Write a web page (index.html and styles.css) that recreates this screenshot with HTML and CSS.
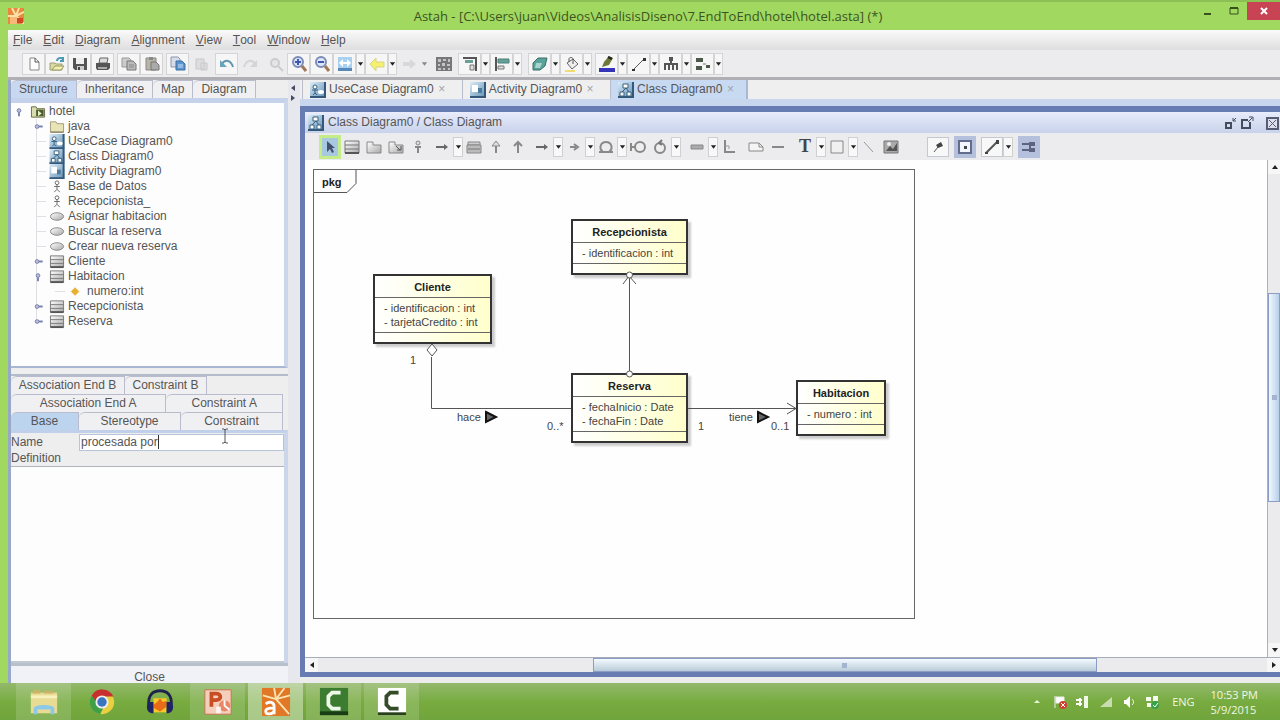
FILE: index.html
```html
<!DOCTYPE html>
<html lang="en">
<head>
    <meta charset="UTF-8">
    <meta name="viewport" content="width=device-width, initial-scale=1.0">
    <title>Astah</title>
    <link rel="stylesheet" href="styles.css">
</head>
<body>
    <!-- icons -->
    <svg class="sprite" aria-hidden="true">
        <defs>
            <linearGradient id="blue" x1="0" y1="0" x2="1" y2="1"><stop offset="0" stop-color="#dcecf6"/><stop offset="1" stop-color="#5c8cb4"/></linearGradient>
            <linearGradient id="gray" x1="0" y1="0" x2="1" y2="1"><stop offset="0" stop-color="#ffffff"/><stop offset="1" stop-color="#a8a8a8"/></linearGradient>
        </defs>
        <symbol id="new" viewBox="0 0 16 16"><path d="M4 2h5l4 4v8H4z" fill="#fff" stroke="#888"/><path d="M9 2v4h4" fill="none" stroke="#555"/></symbol>
        <symbol id="open" viewBox="0 0 16 16"><path d="M1 7h5l1 1h6v6H1z" fill="#d8d8a0" stroke="#a0a070"/><path d="M3 14l3-4h9l-3 4z" fill="#f4f0b0" stroke="#98986a"/><path d="M8 5c0-3 4-4 6-2m0-2v4h-3" fill="none" stroke="#4a9ab8" stroke-width="2"/></symbol>
        <symbol id="save" viewBox="0 0 16 16"><path d="M1 2h14v12H3l-2-2z" fill="#555"/><path d="M4 2h8v6H4z" fill="#eee"/><path d="M5 10h7v4H5z" fill="#ccc"/><path d="M6 11h2v3H6z" fill="#444"/></symbol>
        <symbol id="print" viewBox="0 0 16 16"><path d="M5 2h8l-1 5H4z" fill="#ddd" stroke="#666"/><path d="M1 7h14v5l-2 2H2l-1-2z" fill="#555"/><path d="M3 11h9v2H3z" fill="#aaa"/></symbol>
        <symbol id="copy" viewBox="0 0 16 16"><path d="M1 2h7l2 2v7H1z" fill="#ccc" stroke="#999"/><path d="M6 5h6l3 3v6H6z" fill="#bbb" stroke="#777"/><path d="M8 9h5M8 11h5" stroke="#888"/></symbol>
        <symbol id="paste" viewBox="0 0 16 16"><path d="M2 2h10v12H2z" fill="#b8b4a4" stroke="#888"/><path d="M5 1h4v3H5z" fill="#888"/><path d="M7 6h5l3 3v5H7z" fill="#aaa" stroke="#777"/></symbol>
        <symbol id="copyblue" viewBox="0 0 16 16"><path d="M1 1h7l2 2v8H1z" fill="#d8dce8" stroke="#8894ac"/><path d="M6 5h6l3 3v6H6z" fill="#5c94cc" stroke="#3a6ea8"/><path d="M8 9h5M8 11h5" stroke="#cfe2f4"/></symbol>
        <symbol id="pasteoff" viewBox="0 0 16 16"><path d="M3 3h8v10H3zM8 7h6v7H8z" fill="#ddd" stroke="#c8c8c8"/></symbol>
        <symbol id="undo" viewBox="0 0 16 16"><path d="M3 8c3-5 9-4 11 3" fill="none" stroke="#6098b0" stroke-width="2"/><path d="M1 4v7h7z" fill="#6aa4bc"/></symbol>
        <symbol id="redo" viewBox="0 0 16 16"><path d="M13 8C10 3 4 4 2 11" fill="none" stroke="#d4d4d4" stroke-width="2"/><path d="M15 4v7H8z" fill="#d4d4d4"/></symbol>
        <symbol id="zoomoff" viewBox="0 0 16 16"><circle cx="7" cy="7" r="4" fill="#e4e4e4" stroke="#ccc" stroke-width="2"/><path d="M10 10l5 5" stroke="#ccc" stroke-width="2"/></symbol>
        <symbol id="zoomin" viewBox="0 0 16 16"><circle cx="7" cy="6" r="5" fill="#dce6f8" stroke="#7c8cb8" stroke-width="2"/><path d="M4 6h6M7 3v6" stroke="#3c58b0" stroke-width="2"/><path d="M11 10l4 5" stroke="#a07858" stroke-width="3"/></symbol>
        <symbol id="zoomout" viewBox="0 0 16 16"><circle cx="7" cy="6" r="5" fill="#dce6f8" stroke="#7c8cb8" stroke-width="2"/><path d="M4 6h6" stroke="#3c58b0" stroke-width="2"/><path d="M11 10l4 5" stroke="#a07858" stroke-width="3"/></symbol>
        <symbol id="fit" viewBox="0 0 16 16"><path d="M1 1h14v13H1z" fill="#a8d0f0"/><path d="M2 7l4-4v3h4V3l4 4-4 4V8H6v3z" fill="#fff"/><path d="M1 12h14v3H1z" fill="#5888b8"/></symbol>
        <symbol id="back" viewBox="0 0 16 16"><path d="M1 8l6-6v4h8v5H7v4z" fill="#f4f070" stroke="#d8d480"/></symbol>
        <symbol id="forward" viewBox="0 0 16 16"><path d="M15 8L9 3v3H2v4h7v3z" fill="#d8d8d8"/></symbol>
        <symbol id="grid" viewBox="0 0 16 16"><path d="M0 1h16v14H0z" fill="#777"/><path d="M2 3h3v3H2zM7 3h3v2H7zM12 3h2v3h-2zM2 8h2v2H2zM6 7h3v3H6zM11 8h3v2h-3zM2 12h3v2H2zM7 12h2v2H7zM12 12h2v2h-2z" fill="#c4c4c4"/></symbol>
        <symbol id="alignr" viewBox="0 0 16 16"><path d="M1 2h14M14 1v14" stroke="#555" stroke-width="2"/><path d="M3 4h8v3H3z" fill="#68a098"/><path d="M8 9h4v5H8z" fill="#ddd" stroke="#777"/></symbol>
        <symbol id="alignl" viewBox="0 0 16 16"><path d="M2 1v14" stroke="#555" stroke-width="2"/><path d="M4 3h11v4H4z" fill="#68a098" stroke="#4c807c"/><path d="M4 10h6v3H4z" fill="#ddd" stroke="#777"/></symbol>
        <symbol id="cube" viewBox="0 0 16 16"><path d="M1 7l5-5h9l-2 8-5 4H1z" fill="#58a49c" stroke="#3c6c68"/><path d="M4 7h6l-2 5H3z" fill="#a8d4cc"/></symbol>
        <symbol id="bucket" viewBox="0 0 16 16"><path d="M3 7l6-4 5 5-6 5z" fill="#eee" stroke="#666"/><path d="M5 6V3c0-2 4-2 4 0v5" fill="none" stroke="#555"/><path d="M1 14h10v2H1z" fill="#f0dc70"/></symbol>
        <symbol id="pen" viewBox="0 0 16 16"><path d="M3 11l2-5 5-6 4 2-4 7z" fill="#6c7838"/><path d="M9 1l4 2" stroke="#222" stroke-width="2"/><path d="M0 12h16v4H0z" fill="#3434b8"/></symbol>
        <symbol id="line" viewBox="0 0 16 16"><path d="M2 14L13 3" stroke="#555"/><path d="M1 13h3v2H1zM12 2h3v3h-3z" fill="#333"/></symbol>
        <symbol id="tree" viewBox="0 0 16 16"><path d="M8 3v5M2 14V8h12v6M6 14V8M10 14V8" fill="none" stroke="#555" stroke-width="2"/><path d="M6 1h4v4H6z" fill="#555"/></symbol>
        <symbol id="tree2" viewBox="0 0 16 16"><path d="M1 2h7v4H1zM1 10h6v4H1zM11 9h4v3h-4z" fill="#4c5848"/><path d="M8 8h3" stroke="#777"/></symbol>
        <symbol id="drop" viewBox="0 0 8 16"><path d="M1 6h6L4 10z" fill="#222"/></symbol>
        <symbol id="diagram-class" viewBox="0 0 16 16"><path d="M0 0h16v16H0z" fill="url(#blue)"/><path d="M0 15h16M15 0v16" stroke="#34587c" stroke-width="2"/><path d="M5 2h5v4H5zM2 10h4v4H2zM9 10h4v4H9z" fill="#fff" stroke="#38607e"/><path d="M4 10l4-4 3 4" fill="none" stroke="#38607e"/></symbol>
        <symbol id="diagram-uc" viewBox="0 0 16 16"><path d="M0 0h16v16H0z" fill="url(#blue)"/><path d="M0 15h16M15 0v16" stroke="#34587c" stroke-width="2"/><circle cx="5" cy="5" r="2" fill="#fff" stroke="#38607e"/><path d="M5 7v4M2 8h6M3 13l2-2 2 2" fill="none" stroke="#38607e"/><ellipse cx="11" cy="10" rx="3" ry="2" fill="#fff"/></symbol>
        <symbol id="diagram-act" viewBox="0 0 16 16"><path d="M0 0h16v16H0z" fill="url(#blue)"/><path d="M0 15h16M15 0v16" stroke="#34587c" stroke-width="2"/><path d="M2 3h6v7H2z" fill="#fff"/><path d="M8 6h4v5H8z" fill="#4c7c9c"/></symbol>
        <symbol id="project" viewBox="0 0 16 16"><path d="M1 3h5l1 2h8v9H1z" fill="#d8dcb0" stroke="#666a44"/><path d="M6 6h8v7H6z" fill="#4c5c30"/><path d="M8 7l4 3-4 3z" fill="#e4f0c0"/></symbol>
        <symbol id="folder" viewBox="0 0 16 16"><path d="M1 3h6l1 2h7v9H1z" fill="#e8e4b8" stroke="#a09c78"/><path d="M1 14h14" stroke="#706c50"/></symbol>
        <symbol id="actor" viewBox="0 0 16 16"><circle cx="8" cy="4" r="2" fill="#fff" stroke="#666"/><path d="M8 6v5M5 8h6M5 14l3-3 3 3" fill="none" stroke="#666"/></symbol>
        <symbol id="usecase" viewBox="0 0 16 16"><ellipse cx="8" cy="8" rx="7" ry="4" fill="url(#gray)" stroke="#888"/></symbol>
        <symbol id="class" viewBox="0 0 16 16"><path d="M1 2h14v12H1z" fill="url(#gray)" stroke="#777"/><path d="M1 6h14M1 10h14" stroke="#777"/><path d="M1 14h14" stroke="#555" stroke-width="2"/></symbol>
        <symbol id="attr" viewBox="0 0 16 16"><path d="M7 4l4 4-4 4-4-4z" fill="#e8b030" stroke="#e8b030"/></symbol>
        <symbol id="closed" viewBox="0 0 16 16"><circle cx="7" cy="8" r="2" fill="#b8bedc" stroke="#767eac"/><path d="M9 8h4" stroke="#767eac" stroke-width="2"/></symbol>
        <symbol id="opened" viewBox="0 0 16 16"><circle cx="8" cy="7" r="2" fill="#b8bedc" stroke="#767eac"/><path d="M8 9v4" stroke="#767eac" stroke-width="2"/></symbol>
        <symbol id="cursor" viewBox="0 0 16 16"><path d="M5 2v11l3-3 2 4 2-1-2-4h3z" fill="#445070"/></symbol>
        <symbol id="pkg" viewBox="0 0 16 16"><path d="M1 3h6v3h8v8H1z" fill="url(#gray)" stroke="#888"/></symbol>
        <symbol id="subsys" viewBox="0 0 16 16"><path d="M1 3h6v3h8v8H1z" fill="url(#gray)" stroke="#888"/><path d="M8 7l4 4m-3 0h4V7" fill="none" stroke="#555"/></symbol>
        <symbol id="gen" viewBox="0 0 16 16"><path d="M8 14V7M5 8h6" fill="none" stroke="#888" stroke-width="2"/><circle cx="8" cy="4" r="2" fill="#ddd" stroke="#888"/></symbol>
        <symbol id="fork" viewBox="0 0 16 16"><path d="M8 14V6" stroke="#888" stroke-width="2"/><path d="M4 7l4-5 4 5z" fill="#ddd" stroke="#888"/></symbol>
        <symbol id="up" viewBox="0 0 16 16"><path d="M8 14V3M4 7l4-4 4 4" fill="none" stroke="#888" stroke-width="2"/></symbol>
        <symbol id="arrow" viewBox="0 0 16 16"><path d="M2 8h10" stroke="#666" stroke-width="2"/><path d="M10 5l4 3-4 3z" fill="#666"/></symbol>
        <symbol id="dep" viewBox="0 0 16 16"><path d="M4 8h6M8 5l4 3-4 3" fill="none" stroke="#888" stroke-width="2"/></symbol>
        <symbol id="assoc" viewBox="0 0 16 16"><path d="M2 3h12v3H2z" fill="#ccc" stroke="#888"/><path d="M1 6h14v8H1z" fill="#bbb" stroke="#888"/><path d="M2 10h12" stroke="#777"/></symbol>
        <symbol id="omega" viewBox="0 0 16 16"><path d="M1 13h14M5 13C0 9 3 3 8 3s8 6 3 10" fill="none" stroke="#888" stroke-width="2"/></symbol>
        <symbol id="boundary" viewBox="0 0 16 16"><path d="M1 4v8M1 8h4" stroke="#888" stroke-width="2"/><circle cx="10" cy="8" r="5" fill="#eee" stroke="#888" stroke-width="2"/></symbol>
        <symbol id="control" viewBox="0 0 16 16"><circle cx="8" cy="9" r="5" fill="#eee" stroke="#888" stroke-width="2"/><path d="M10 1L7 4l3 2" fill="none" stroke="#777" stroke-width="2"/></symbol>
        <symbol id="bar" viewBox="0 0 16 16"><path d="M2 6h12v4H2z" fill="#aaa" stroke="#888"/></symbol>
        <symbol id="link" viewBox="0 0 16 16"><path d="M4 1v12h10" fill="none" stroke="#888" stroke-width="2"/><path d="M4 7h4v3" fill="none" stroke="#999"/></symbol>
        <symbol id="note" viewBox="0 0 16 16"><path d="M1 4h10l4 4v4H1z" fill="#f4f4f4" stroke="#888"/><path d="M11 4v4h4" fill="none" stroke="#888"/></symbol>
        <symbol id="dash" viewBox="0 0 16 16"><path d="M2 8h12" stroke="#888" stroke-width="2"/></symbol>
        <symbol id="rect" viewBox="0 0 16 16"><path d="M2 2h12v12H2z" fill="#f0f0f0" stroke="#888"/></symbol>
        <symbol id="thin" viewBox="0 0 16 16"><path d="M3 3l9 10" stroke="#999"/></symbol>
        <symbol id="image" viewBox="0 0 16 16"><path d="M1 2h14v12H1z" fill="#aaa" stroke="#777"/><path d="M3 12l4-5 3 3 4-6v8z" fill="#555"/><circle cx="6" cy="5" r="2" fill="#eee"/></symbol>
        <symbol id="pin" viewBox="0 0 16 16"><path d="M4 13l4-5" stroke="#555"/><path d="M6 6l5-3 2 4-5 2z" fill="#444"/></symbol>
        <symbol id="focus" viewBox="0 0 16 16"><path d="M2 2h12v12H2z" fill="#f4f6ff" stroke="#626c8c" stroke-width="2"/><path d="M7 7h3v3H7z" fill="#444"/></symbol>
        <symbol id="curve" viewBox="0 0 16 16"><path d="M2 14L13 3" stroke="#555" stroke-width="2"/><path d="M12 1h3v4h-3zM1 13h3v2H1z" fill="#444"/></symbol>
        <symbol id="snap" viewBox="0 0 16 16"><path d="M1 5h7M1 11h7M9 3v10" stroke="#5c6480" stroke-width="2"/><path d="M9 3h5v4H9zM9 9h5v4H9z" fill="#5c6480"/></symbol>
    </svg>

    <header class="titlebar">
        <svg class="logo" viewBox="0 0 16 16"><path d="M0 0h16v16H0z" fill="#e8883c"/><path d="M8 8L4 0M8 8l3-8M8 8l8-4M8 8H0M8 8l8 8" stroke="#fbe0a8" stroke-width="2"/><path d="M2 9h7v7H2z" fill="#f8b878"/><path d="M9 10h6v5H9z" fill="#d04828"/></svg>
        <h1>Astah - [C:\Users\juan\Videos\AnalisisDiseno\7.EndToEnd\hotel\hotel.asta] (*)</h1>
        <div class="window-buttons">
            <button type="button" aria-label="Minimize"><svg viewBox="0 0 12 12"><path d="M2 9h7" stroke="#38501c" stroke-width="2"/></svg></button>
            <button type="button" aria-label="Maximize"><svg viewBox="0 0 12 12"><path d="M2 3h8v6H2z" fill="none" stroke="#38501c"/><path d="M2 3h8" stroke="#38501c" stroke-width="2"/></svg></button>
            <button type="button" class="close" aria-label="Close window"><svg viewBox="0 0 12 12"><path d="M3 3l6 6M9 3l-6 6" stroke="#fff" stroke-width="2"/></svg></button>
        </div>
    </header>

    <div class="window">
        <nav class="menu">
            <button type="button"><u>F</u>ile</button>
            <button type="button"><u>E</u>dit</button>
            <button type="button"><u>D</u>iagram</button>
            <button type="button"><u>A</u>lignment</button>
            <button type="button"><u>V</u>iew</button>
            <button type="button"><u>T</u>ool</button>
            <button type="button"><u>W</u>indow</button>
            <button type="button"><u>H</u>elp</button>
        </nav>

        <div class="toolbar">
            <div class="group">
                <button type="button" aria-label="New"><svg><use href="#new"/></svg></button>
                <button type="button" aria-label="Open"><svg><use href="#open"/></svg></button>
                <button type="button" aria-label="Save"><svg><use href="#save"/></svg></button>
                <button type="button" aria-label="Print"><svg><use href="#print"/></svg></button>
            </div>
            <div class="group">
                <button type="button" aria-label="Copy"><svg><use href="#copy"/></svg></button>
                <button type="button" aria-label="Paste"><svg><use href="#paste"/></svg></button>
            </div>
            <div class="group">
                <button type="button" aria-label="Copy style"><svg><use href="#copyblue"/></svg></button>
                <button type="button" class="off" aria-label="Paste style"><svg><use href="#pasteoff"/></svg></button>
            </div>
            <div class="group">
                <button type="button" aria-label="Undo"><svg><use href="#undo"/></svg></button>
                <button type="button" class="off" aria-label="Redo"><svg><use href="#redo"/></svg></button>
            </div>
            <div class="group">
                <button type="button" class="off" aria-label="Zoom"><svg><use href="#zoomoff"/></svg></button>
                <button type="button" aria-label="Zoom in"><svg><use href="#zoomin"/></svg></button>
                <button type="button" aria-label="Zoom out"><svg><use href="#zoomout"/></svg></button>
                <button type="button" aria-label="Fit"><svg><use href="#fit"/></svg></button>
                <button type="button" class="drop" aria-label="Fit options"><svg><use href="#drop"/></svg></button>
                <button type="button" aria-label="Back"><svg><use href="#back"/></svg></button>
                <button type="button" class="drop" aria-label="Back list"><svg><use href="#drop"/></svg></button>
                <button type="button" class="off" aria-label="Forward"><svg><use href="#forward"/></svg></button>
                <button type="button" class="drop off" aria-label="Forward list"><svg><use href="#drop"/></svg></button>
            </div>
            <div class="group">
                <button type="button" class="off" aria-label="Map"><svg><use href="#grid"/></svg></button>
            </div>
            <div class="group">
                <button type="button" aria-label="Align right"><svg><use href="#alignr"/></svg></button>
                <button type="button" class="drop" aria-label="Align options"><svg><use href="#drop"/></svg></button>
                <button type="button" aria-label="Align left"><svg><use href="#alignl"/></svg></button>
                <button type="button" class="drop" aria-label="Size options"><svg><use href="#drop"/></svg></button>
            </div>
            <div class="group wide">
                <button type="button" aria-label="Depth"><svg><use href="#cube"/></svg></button>
                <button type="button" class="drop" aria-label="Depth options"><svg><use href="#drop"/></svg></button>
                <button type="button" aria-label="Fill color"><svg><use href="#bucket"/></svg></button>
                <button type="button" class="drop" aria-label="Fill options"><svg><use href="#drop"/></svg></button>
            </div>
            <div class="group">
                <button type="button" aria-label="Line color"><svg><use href="#pen"/></svg></button>
                <button type="button" class="drop" aria-label="Line colors"><svg><use href="#drop"/></svg></button>
                <button type="button" aria-label="Line style"><svg><use href="#line"/></svg></button>
                <button type="button" class="drop" aria-label="Line styles"><svg><use href="#drop"/></svg></button>
                <button type="button" aria-label="Layout vertical"><svg><use href="#tree"/></svg></button>
                <button type="button" class="drop" aria-label="Layouts vertical"><svg><use href="#drop"/></svg></button>
                <button type="button" aria-label="Layout horizontal"><svg><use href="#tree2"/></svg></button>
                <button type="button" class="drop" aria-label="Layouts horizontal"><svg><use href="#drop"/></svg></button>
            </div>
        </div>

        <main>
            <aside class="side">
                <div class="tabs">
                    <button type="button" class="tab active">Structure</button>
                    <button type="button" class="tab">Inheritance</button>
                    <button type="button" class="tab">Map</button>
                    <button type="button" class="tab">Diagram</button>
                </div>
                <div class="structure">
                    <div class="row"><button type="button" aria-label="Collapse hotel"><svg><use href="#opened"/></svg></button><svg><use href="#project"/></svg>hotel</div>
                    <ul class="tree">
                        <li class="row"><button type="button" aria-label="Expand java"><svg><use href="#closed"/></svg></button><svg><use href="#folder"/></svg>java</li>
                        <li class="row"><i></i><svg><use href="#diagram-uc"/></svg>UseCase Diagram0</li>
                        <li class="row"><i></i><svg><use href="#diagram-class"/></svg>Class Diagram0</li>
                        <li class="row"><i></i><svg><use href="#diagram-act"/></svg>Activity Diagram0</li>
                        <li class="row"><i></i><svg><use href="#actor"/></svg>Base de Datos</li>
                        <li class="row"><i></i><svg><use href="#actor"/></svg>Recepcionista_</li>
                        <li class="row"><i></i><svg><use href="#usecase"/></svg>Asignar habitacion</li>
                        <li class="row"><i></i><svg><use href="#usecase"/></svg>Buscar la reserva</li>
                        <li class="row"><i></i><svg><use href="#usecase"/></svg>Crear nueva reserva</li>
                        <li class="row"><button type="button" aria-label="Expand Cliente"><svg><use href="#closed"/></svg></button><svg><use href="#class"/></svg>Cliente</li>
                        <li class="row"><button type="button" aria-label="Collapse Habitacion"><svg><use href="#opened"/></svg></button><svg><use href="#class"/></svg>Habitacion</li>
                        <li class="row sub"><i></i><svg><use href="#attr"/></svg>numero:int</li>
                        <li class="row"><button type="button" aria-label="Expand Recepcionista"><svg><use href="#closed"/></svg></button><svg><use href="#class"/></svg>Recepcionista</li>
                        <li class="row"><button type="button" aria-label="Expand Reserva"><svg><use href="#closed"/></svg></button><svg><use href="#class"/></svg>Reserva</li>
                    </ul>
                </div>

                <div class="property">
                    <div class="prop-tabs short">
                        <button type="button" class="tab">Association End B</button>
                        <button type="button" class="tab">Constraint B</button>
                    </div>
                    <div class="prop-tabs two">
                        <button type="button" class="tab">Association End A</button>
                        <button type="button" class="tab">Constraint A</button>
                    </div>
                    <div class="prop-tabs three">
                        <button type="button" class="tab active">Base</button>
                        <button type="button" class="tab">Stereotype</button>
                        <button type="button" class="tab">Constraint</button>
                    </div>
                    <form class="base">
                        <div class="name-row">
                            <label for="name">Name</label>
                            <input type="text" id="name" value="procesada por" autocomplete="off">
                            <span class="caret"></span>
                            <svg class="ibeam" viewBox="0 0 8 16"><path d="M1 1h2l1 1 1-1h2M4 2v12M1 15h2l1-1 1 1h2" fill="none" stroke="#555"/></svg>
                        </div>
                        <label for="definition">Definition</label>
                        <textarea id="definition"></textarea>
                    </form>
                    <button type="button" class="close-prop">Close</button>
                </div>
            </aside>

            <div class="splitter">
                <svg viewBox="0 0 8 20"><path d="M6 2v6L2 5zM2 12v6l4-3z" fill="#444c64"/></svg>
            </div>

            <section class="editor">
                <div class="editor-tabs">
                    <div class="etab"><svg><use href="#diagram-uc"/></svg><span>UseCase Diagram0</span><button type="button" aria-label="Close UseCase Diagram0">×</button></div>
                    <div class="etab"><svg><use href="#diagram-act"/></svg><span>Activity Diagram0</span><button type="button" aria-label="Close Activity Diagram0">×</button></div>
                    <div class="etab active"><svg><use href="#diagram-class"/></svg><span>Class Diagram0</span><button type="button" aria-label="Close Class Diagram0">×</button></div>
                </div>
                <div class="frame">
                    <div class="frame-title">
                        <svg><use href="#diagram-class"/></svg>
                        <h2>Class Diagram0 / Class Diagram</h2>
                        <button type="button" aria-label="Minimize diagram"><svg viewBox="0 0 16 16"><path d="M3 8h5v5H3z" fill="none" stroke="#444c60" stroke-width="2"/><path d="M13 3l-3 3M10 3v3h3" fill="none" stroke="#444c60"/></svg></button>
                        <button type="button" aria-label="Maximize diagram"><svg viewBox="0 0 16 16"><path d="M9 5H3v8h8V7" fill="none" stroke="#444c60" stroke-width="2"/><path d="M9 7l4-4M10 2h4v4" fill="none" stroke="#444c60"/></svg></button>
                        <button type="button" class="last" aria-label="Close diagram"><svg viewBox="0 0 16 16"><path d="M3 3h11v11H3z" fill="#dde" stroke="#555c74" stroke-width="2"/><path d="M5 5l7 7M12 5l-7 7" stroke="#555c74"/></svg></button>
                    </div>
                    <div class="toolbar palette">
                        <div class="group">
                            <button type="button" class="picked" aria-label="Select"><svg><use href="#cursor"/></svg></button>
                            <button type="button" aria-label="Class"><svg><use href="#class"/></svg></button>
                            <button type="button" aria-label="Package"><svg><use href="#pkg"/></svg></button>
                            <button type="button" aria-label="Subsystem"><svg><use href="#subsys"/></svg></button>
                            <button type="button" aria-label="Containment"><svg><use href="#gen"/></svg></button>
                        </div>
                        <div class="group tight">
                            <button type="button" aria-label="Association"><svg><use href="#arrow"/></svg></button>
                            <button type="button" class="drop" aria-label="Associations"><svg><use href="#drop"/></svg></button>
                            <button type="button" aria-label="Association class"><svg><use href="#assoc"/></svg></button>
                            <button type="button" aria-label="Generalization"><svg><use href="#fork"/></svg></button>
                            <button type="button" aria-label="Realization"><svg><use href="#up"/></svg></button>
                        </div>
                        <div class="group tight">
                            <button type="button" aria-label="Dependency"><svg><use href="#arrow"/></svg></button>
                            <button type="button" class="drop" aria-label="Dependencies"><svg><use href="#drop"/></svg></button>
                            <button type="button" aria-label="Usage"><svg><use href="#dep"/></svg></button>
                            <button type="button" class="drop" aria-label="Usages"><svg><use href="#drop"/></svg></button>
                            <button type="button" aria-label="Interface"><svg><use href="#omega"/></svg></button>
                            <button type="button" class="drop" aria-label="Interfaces"><svg><use href="#drop"/></svg></button>
                            <button type="button" aria-label="Boundary"><svg><use href="#boundary"/></svg></button>
                            <button type="button" aria-label="Control"><svg><use href="#control"/></svg></button>
                            <button type="button" class="drop" aria-label="Controls"><svg><use href="#drop"/></svg></button>
                        </div>
                        <div class="group">
                            <button type="button" aria-label="Instance"><svg><use href="#bar"/></svg></button>
                            <button type="button" class="drop" aria-label="Instances"><svg><use href="#drop"/></svg></button>
                            <button type="button" aria-label="Link"><svg><use href="#link"/></svg></button>
                        </div>
                        <div class="group">
                            <button type="button" aria-label="Note"><svg><use href="#note"/></svg></button>
                            <button type="button" aria-label="Note anchor"><svg><use href="#dash"/></svg></button>
                        </div>
                        <div class="group">
                            <button type="button" class="text-tool" aria-label="Text">T</button>
                            <button type="button" class="drop" aria-label="Texts"><svg><use href="#drop"/></svg></button>
                            <button type="button" aria-label="Rectangle"><svg><use href="#rect"/></svg></button>
                            <button type="button" class="drop" aria-label="Shapes"><svg><use href="#drop"/></svg></button>
                            <button type="button" aria-label="Line"><svg><use href="#thin"/></svg></button>
                            <button type="button" aria-label="Image"><svg><use href="#image"/></svg></button>
                        </div>
                        <div class="group far">
                            <button type="button" class="boxed" aria-label="Pin"><svg><use href="#pin"/></svg></button>
                        </div>
                        <div class="group">
                            <button type="button" class="on" aria-label="Focus"><svg><use href="#focus"/></svg></button>
                        </div>
                        <div class="group">
                            <button type="button" class="boxed" aria-label="Curve"><svg><use href="#curve"/></svg></button>
                            <button type="button" class="drop" aria-label="Curves"><svg><use href="#drop"/></svg></button>
                        </div>
                        <div class="group">
                            <button type="button" class="on" aria-label="Snap"><svg><use href="#snap"/></svg></button>
                        </div>
                    </div>

                    <div class="view">
                        <div class="canvas">
                            <div class="pkg-frame"></div>
                            <div class="uml recepcionista">
                                <h3>Recepcionista</h3>
                                <p>- identificacion : int</p>
                            </div>
                            <div class="uml cliente">
                                <h3>Cliente</h3>
                                <p>- identificacion : int<br>- tarjetaCredito : int</p>
                            </div>
                            <div class="uml reserva">
                                <h3>Reserva</h3>
                                <p>- fechaInicio : Date<br>- fechaFin : Date</p>
                            </div>
                            <div class="uml habitacion">
                                <h3>Habitacion</h3>
                                <p>- numero : int</p>
                            </div>
                            <!-- package corner and associations -->
                            <svg class="lines" width="620" height="470" fill="none" stroke="#555">
                                <path d="M9 32.500H42l9-9V10" />
                                <path d="M324.500 117v95M318 124l6-8 7 8"/>
                                <circle cx="324.500" cy="115" r="3" fill="#fff"/>
                                <circle cx="324.500" cy="214" r="3" fill="#fff"/>
                                <path d="M126.500 197v51.500H266M383 248.500H491M482 243l9 5.500-9 5.500"/>
                                <path d="M127 184l5 6-5 6-5-6z" fill="#fff"/>
                                <path d="M181 252l10 5-10 5zM453 252l10 5-10 5z" fill="#666" stroke="#111" stroke-width="2"/>
                            </svg>
                            <b class="label pkg-label">pkg</b>
                            <span class="label l-one">1</span>
                            <span class="label l-hace">hace</span>
                            <span class="label l-many">0..*</span>
                            <span class="label l-one-b">1</span>
                            <span class="label l-tiene">tiene</span>
                            <span class="label l-opt">0..1</span>
                        </div>
                        <div class="vscroll">
                            <button type="button" aria-label="Scroll up"><svg viewBox="0 0 8 8"><path d="M1 6h6L4 2z" fill="#222"/></svg></button>
                            <div class="before"></div>
                            <div class="thumb"></div>
                            <div class="after"></div>
                            <button type="button" aria-label="Scroll down"><svg viewBox="0 0 8 8"><path d="M1 2h6L4 6z" fill="#222"/></svg></button>
                        </div>
                    </div>
                    <div class="hscroll">
                        <button type="button" aria-label="Scroll left"><svg viewBox="0 0 8 8"><path d="M6 1v6L2 4z" fill="#222"/></svg></button>
                        <div class="before"></div>
                        <div class="thumb"></div>
                        <div class="after"></div>
                        <button type="button" aria-label="Scroll right"><svg viewBox="0 0 8 8"><path d="M2 1v6l4-3z" fill="#222"/></svg></button>
                    </div>
                </div>
            </section>
        </main>
    </div>

    <footer class="taskbar">
        <button type="button" class="task lit" aria-label="File Explorer"><svg viewBox="0 0 32 32"><path d="M2 6h28v22H2z" fill="#e8dc94"/><path d="M4 3h8v4H4zM16 4h10v3H16z" fill="#c8b468"/><path d="M2 9h28v3H2z" fill="#f8f0bc"/><path d="M5 29v-6c0-5 22-5 22 0v6h-4v-5H9v5z" fill="#8cc8e8"/></svg></button>
        <button type="button" class="task" aria-label="Chrome"><svg viewBox="0 0 32 32"><circle cx="16" cy="16" r="13" fill="#e8d040"/><path d="M5 9a13 13 0 0 0 9 20l5-10z" fill="#40a048"/><path d="M16 10h12a13 13 0 0 0-23-1l6 8z" fill="#c83030"/><circle cx="16" cy="16" r="7" fill="#eee"/><circle cx="16" cy="16" r="5" fill="#3c74c0"/></svg></button>
        <button type="button" class="task" aria-label="Audacity"><svg viewBox="0 0 32 32"><path d="M9 12h14v15H9z" fill="#f8c828"/><path d="M9 19l4-3 3-4 3 4 4-1v6l-7 5-7-4z" fill="#e86c18"/><path d="M4 19C3 8 9 4 16 4s13 4 12 15" fill="none" stroke="#20244c" stroke-width="3"/><path d="M3 16h6v12C4 28 2 25 2 21zM29 16h-6v12c5 0 7-3 7-7z" fill="#202464"/></svg></button>
        <button type="button" class="task lit" aria-label="PowerPoint"><svg viewBox="0 0 32 32"><path d="M2 3h28v26H2z" fill="#f4d0bc" stroke="#c87050"/><path d="M9 21V7h5c6 0 6 7 0 7H9" fill="none" stroke="#c84c24" stroke-width="4"/><circle cx="23" cy="20" r="6" fill="#e88868"/><path d="M23 20v-6M23 20l5 4" stroke="#fff" stroke-width="2"/><path d="M14 21h5v7h-5z" fill="#fff4ee"/></svg></button>
        <button type="button" class="task current" aria-label="Astah"><svg viewBox="0 0 32 32"><path d="M1 1h30v30H1z" fill="#e07828"/><path d="M16 13L2 9M16 13L14 1M16 13L25 1M16 13l15-4M16 13l14 16" stroke="#fce4b0" stroke-width="2"/><path d="M5 18c4-3 9-2 9 3v8M14 23c-5-1-9 0-9 3s6 4 9 0" fill="none" stroke="#fff" stroke-width="3"/></svg></button>
        <button type="button" class="task lit" aria-label="Camtasia"><svg viewBox="0 0 32 32"><path d="M1 1h30v29H1z" fill="#3c7c30"/><path d="M1 26h30v4H1z" fill="#183c14"/><path d="M23 6h-9l-4 4v9l4 4h9" fill="none" stroke="#eef8e8" stroke-width="4"/></svg></button>
        <button type="button" class="task lit" aria-label="Camtasia Recorder"><svg viewBox="0 0 32 32"><path d="M1 1h30v29H1z" fill="#fff"/><path d="M1 27h30v3H1z" fill="#28401c"/><path d="M23 6h-9l-4 4v9l4 4h9" fill="none" stroke="#344c28" stroke-width="4"/></svg></button>
        <div class="tray">
            <svg viewBox="0 0 16 16"><path d="M5 9h6L8 6z" fill="#e8f4d8"/></svg>
            <svg viewBox="0 0 16 16"><path d="M3 2v12M4 3h8v6H4z" fill="#fff" stroke="#eee"/><circle cx="11" cy="11" r="4" fill="#d04030"/><path d="M9 9l4 4M13 9l-4 4" stroke="#fff"/></svg>
            <svg viewBox="0 0 16 16"><path d="M1 6h6M1 10h6M5 4v8" stroke="#fff" stroke-width="2"/><path d="M9 2h4v12H9z" fill="#f0f8e8"/></svg>
            <svg viewBox="0 0 16 16"><path d="M2 13L14 3v10z" fill="#c8dcb0"/></svg>
            <svg viewBox="0 0 16 16"><path d="M3 6h2l4-4v12l-4-4H3z" fill="#fff"/><path d="M11 5c2 2 2 4 0 6" fill="none" stroke="#fff"/></svg>
            <svg viewBox="0 0 16 16"><path d="M2 3h5v4H2zM9 2h5v5H9zM3 9h5v4H3z" fill="#f4fff0"/><circle cx="11" cy="11" r="4" fill="#38a048"/><path d="M9 11l2 2 3-4" fill="none" stroke="#fff"/></svg>
            <span class="lang">ENG</span>
            <div class="clock"><time>10:53 PM</time><time>5/9/2015</time></div>
        </div>
    </footer>
</body>
</html>
```
FILE: styles.css
```css
*{
    margin: 0;
    padding: 0;
    box-sizing: border-box;
}
body{
    display: flex;
    flex-direction: column;
    height: 100vh;
    overflow: hidden;
    background-color: #a0d860;
    font-family: "Liberation Sans", Arial, sans-serif;
    font-size: 12px;
    line-height: 15px;
    color: #555;
}
button, input, textarea{
    font: inherit;
    color: inherit;
    border: none;
    background: none;
}
button{
    display: flex;
    align-items: center;
    justify-content: center;
    white-space: nowrap;
    cursor: pointer;
}
svg{
    display: block;
    flex: none;
    width: 16px;
    height: 16px;
}
.sprite{
    position: absolute;
    width: 0;
    height: 0;
}

/* title bar */
.titlebar{
    display: flex;
    align-items: center;
    height: 30px;
    padding-left: 8px;
    border-top: 2px solid #8cc054;
    background-color: #a0d860;
}
.titlebar h1{
    flex: 1;
    padding-left: 77px;
    font-family: "Open Sans", sans-serif;
    font-size: 13px;
    font-weight: normal;
    line-height: 20px;
    text-align: center;
    color: #3c5420;
}
.window-buttons{
    display: flex;
    align-self: flex-start;
}
.window-buttons button{
    width: 26px;
    height: 18px;
}
.window-buttons svg{
    width: 12px;
    height: 12px;
}
.window-buttons .close{
    width: 33px;
    background-color: #c84454;
}

.window{
    flex: 1;
    display: flex;
    flex-direction: column;
    min-height: 0;
    margin-left: 8px;
    background-color: #ececec;
}
.menu{
    display: flex;
    gap: 11px;
    height: 20px;
    padding-left: 5px;
    background: linear-gradient(#fafafa, #dededf);
}

/* toolbars */
.toolbar{
    display: flex;
    align-items: center;
    gap: 3px;
    height: 30px;
    padding-left: 14px;
    border-bottom: 3px solid #b0b0b4;
    background-color: #ececee;
}
.group{
    display: flex;
    align-items: center;
}
.toolbar button{
    width: 23px;
    height: 22px;
    border: 1px solid #d4d4d4;
    background-color: #f6f6f6;
}
.toolbar .drop{
    width: 9px;
}
.toolbar .drop svg{
    width: 7px;
    height: 16px;
}
.toolbar .off{
    border-color: transparent;
    background: none;
}
.drop.off{
    opacity: 0.5;
}
.toolbar .wide{
    margin-left: 3px;
}
.palette{
    gap: 5px;
    height: 27px;
    border-bottom: none;
}
.palette button{
    width: 22px;
    height: 24px;
    border: none;
    background: none;
}
.palette .drop{
    width: 10px;
    height: 20px;
    border: 1px solid #d0d0d0;
    background-color: #f8f8f8;
}
.palette .tight{
    margin-left: -3px;
}
.palette .far{
    margin-left: 20px;
}
.palette .picked{
    border: 3px solid #c4ec88;
    background-color: #a8c8e0;
}
.palette .boxed{
    height: 20px;
    border: 1px solid #c4c8d0;
    background-color: #f8f8f8;
}
.palette .on{
    height: 22px;
    background-color: #b4c0dc;
}
.palette .text-tool{
    font-family: "Liberation Serif", serif;
    font-size: 18px;
    font-weight: bold;
    color: #444;
}

main{
    flex: 1;
    display: flex;
    min-height: 0;
}

/* left side */
.side{
    display: flex;
    flex-direction: column;
    width: 280px;
    border-left: 3px solid #98a8c8;
    background-color: #eeeeee;
}
.tabs{
    display: flex;
    height: 18px;
}
.tab{
    padding: 0 8px;
    border: 1px solid #b8bccc;
    border-width: 1px 1px 0 0;
    border-top-left-radius: 6px;
    background-color: #f0f0f2;
}
.tab.active{
    background-color: #c8d8f0;
}
.structure{
    height: 270px;
    padding-top: 1px;
    border-top: 5px solid #c4d2ec;
    border-right: 4px solid #ccd6ea;
    border-bottom: 2px solid #a8b8d4;
    background-color: #fdfdfd;
}
.row{
    display: flex;
    align-items: center;
    gap: 3px;
    height: 15px;
}
.row svg{
    height: 15px;
}
.row i{
    width: 16px;
}
.row i::before{
    content: "";
    display: block;
    width: 10px;
    margin-left: 6px;
    border-top: 1px solid #e0e0e4;
}
.tree{
    margin-left: 19px;
    list-style: none;
    background: linear-gradient(#e0e0e4, #e0e0e4) 6px 0 / 1px 200px no-repeat;
}
.sub{
    margin-left: 19px;
}

/* property view */
.property{
    flex: 1;
    display: flex;
    flex-direction: column;
    min-height: 0;
    margin-top: 6px;
    border-top: 2px solid #b4bccc;
}
.prop-tabs{
    display: grid;
    height: 18px;
    margin-right: 5px;
}
.prop-tabs .tab{
    padding: 0;
}
.short{
    grid-template-columns: 114px 82px;
}
.two{
    grid-template-columns: 4fr 3fr;
}
.three{
    grid-template-columns: 2fr 3fr 3fr;
}
.prop-tabs .active{
    background-color: #bcd4ee;
}
.base{
    flex: 1;
    display: flex;
    flex-direction: column;
    min-height: 0;
    border-top: 3px solid #c0d0ea;
    border-right: 4px solid #ccd6ea;
}
.name-row{
    position: relative;
    display: flex;
    align-items: center;
    height: 18px;
}
.name-row label{
    width: 68px;
}
.name-row input{
    flex: 1;
    min-width: 0;
    height: 17px;
    padding-left: 1px;
    border: 1px solid #b8c4d8;
    background-color: #fff;
}
.caret{
    position: absolute;
    left: 147px;
    top: 2px;
    width: 1px;
    height: 14px;
    background-color: #333;
}
.ibeam{
    position: absolute;
    left: 210px;
    top: -5px;
    width: 8px;
}
.base textarea{
    flex: 1;
    border-top: 1px solid #b0b4bc;
    border-bottom: 2px solid #c0c8d4;
    background-color: #fdfdfd;
    resize: none;
}
.close-prop{
    height: 20px;
    padding-top: 6px;
    border-top: 3px solid #b8c0cc;
    background-color: #f0f2f8;
}

.splitter{
    width: 12px;
    padding: 3px 0 0 1px;
    background-color: #e6e8ee;
}
.splitter svg{
    width: 8px;
    height: 20px;
}

/* diagram editor */
.editor{
    flex: 1;
    display: flex;
    flex-direction: column;
    min-width: 0;
    padding-bottom: 6px;
}
.editor-tabs{
    display: flex;
    height: 26px;
    padding-left: 2px;
    border-bottom: 7px solid #c8d6ee;
    background-color: #efeff0;
}
.etab{
    display: flex;
    align-items: center;
    gap: 3px;
    padding: 0 15px 0 7px;
    border-left: 1px solid #b8bccc;
}
.etab button{
    width: 10px;
    color: #a0a4ac;
}
.etab.active{
    padding-right: 11px;
    border-right: 2px solid #a8b8d4;
    background-color: #c8daf2;
}
.frame{
    flex: 1;
    display: flex;
    flex-direction: column;
    min-height: 0;
    border: 5px solid #687cb4;
    border-top-width: 6px;
    border-right: none;
}
.frame-title{
    display: flex;
    align-items: center;
    height: 21px;
    padding-left: 3px;
    background: linear-gradient(#e8ecfc, #c8d2ea);
}
.frame-title h2{
    flex: 1;
    padding-left: 4px;
    font-size: 12px;
    font-weight: normal;
}
.frame-title .last{
    margin-left: 9px;
}
.view{
    flex: 1;
    display: flex;
    min-height: 0;
}
.canvas{
    position: relative;
    flex: 1;
    overflow: hidden;
    background-color: #fefefe;
    color: #444;
}
.pkg-frame{
    position: absolute;
    left: 8px;
    top: 9px;
    width: 602px;
    height: 450px;
    border: 1px solid #666;
}
.lines{
    position: absolute;
    left: 0;
    top: 0;
    width: 620px;
    height: 470px;
}
.uml{
    position: absolute;
    padding-bottom: 9px;
    border: 2px solid #333;
    background: linear-gradient(90deg, #ffffff, #ffffcc);
    box-shadow: 3px 3px 2px #ccc;
    font-size: 11px;
    line-height: 14px;
}
.uml h3{
    height: 22px;
    padding-top: 4px;
    border-bottom: 1px solid #666;
    font-size: 11px;
    text-align: center;
    color: #222;
}
.uml p{
    padding: 3px 0 3px 9px;
    border-bottom: 1px solid #666;
    white-space: nowrap;
}
.recepcionista{
    left: 266px;
    top: 59px;
    width: 117px;
}
.cliente{
    left: 68px;
    top: 114px;
    width: 119px;
}
.reserva{
    left: 266px;
    top: 213px;
    width: 117px;
}
.habitacion{
    left: 491px;
    top: 220px;
    width: 90px;
}
.label{
    position: absolute;
    font-size: 11px;
    line-height: 14px;
}
.pkg-label{
    left: 17px;
    top: 15px;
    color: #222;
}
.l-one{
    left: 105px;
    top: 193px;
}
.l-hace{
    left: 152px;
    top: 250px;
}
.l-many{
    left: 242px;
    top: 259px;
}
.l-one-b{
    left: 393px;
    top: 259px;
}
.l-tiene{
    left: 424px;
    top: 250px;
}
.l-opt{
    left: 466px;
    top: 259px;
}

/* scrollbars */
.vscroll, .hscroll{
    display: flex;
    background-color: #ebebed;
}
.vscroll{
    flex-direction: column;
    width: 13px;
    border-left: 1px solid #b0b0b8;
}
.hscroll{
    height: 15px;
    border-top: 1px solid #a8acb8;
}
.vscroll button, .hscroll button{
    width: 13px;
    height: 14px;
    background-color: #f6f6f6;
}
.vscroll button svg, .hscroll button svg{
    width: 8px;
    height: 8px;
}
.thumb{
    display: flex;
    align-items: center;
    justify-content: center;
    border: 1px solid #8c9cc4;
}
.thumb::before{
    content: "";
    width: 5px;
    height: 5px;
    background-color: #a4b4d0;
}
.vscroll .before{
    flex: 120;
}
.vscroll .thumb{
    flex: 207;
    background: linear-gradient(90deg, #f0f8ff, #b8d0e8);
}
.vscroll .after{
    flex: 142;
}
.hscroll .before{
    flex: 275;
}
.hscroll .thumb{
    flex: 503;
    background: linear-gradient(#f4faff, #b8ccd8);
}
.hscroll .after{
    flex: 170;
}

/* taskbar */
.taskbar{
    display: flex;
    gap: 3px;
    height: 37px;
    padding-left: 16px;
    background: linear-gradient(#94b86c, #78ac40 50%, #70a43c);
}
.task{
    width: 55px;
}
.task svg{
    width: 30px;
    height: 30px;
}
.lit{
    background-color: rgba(255, 255, 255, 0.15);
}
.current{
    background-color: rgba(255, 255, 255, 0.4);
}
.tray{
    display: flex;
    align-items: center;
    gap: 7px;
    margin-left: auto;
    padding-right: 22px;
    font-family: "Open Sans", sans-serif;
    font-size: 11px;
    color: #f0f8e4;
}
.lang{
    padding: 0 9px 0 5px;
}
.clock time{
    display: block;
}
```
